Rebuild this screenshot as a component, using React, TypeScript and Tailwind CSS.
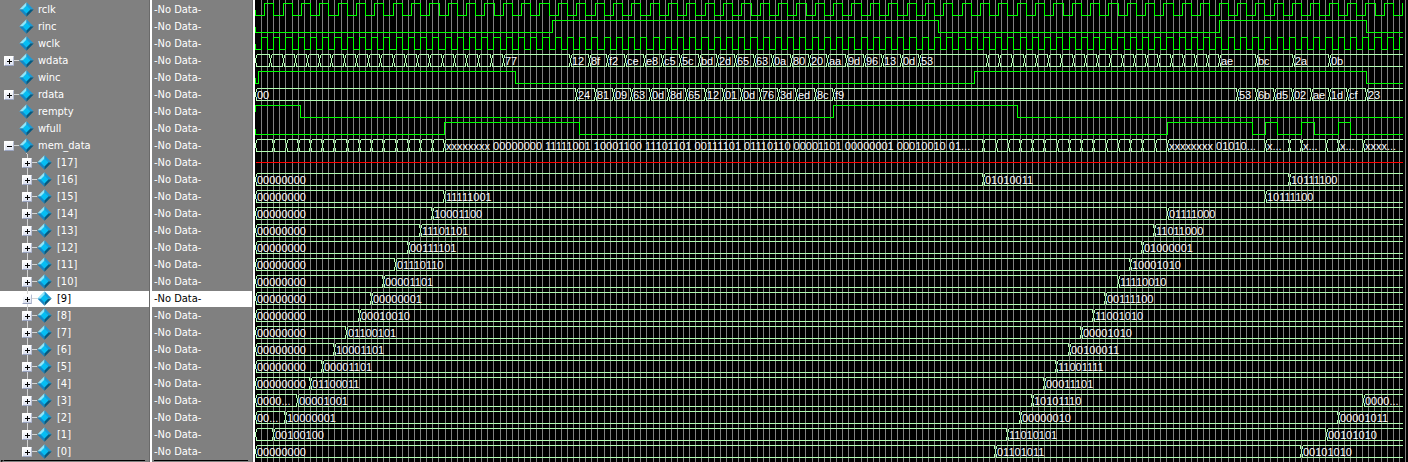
import React from "react";

type Segment = [start: number, text: string];
type Signal = {
  name: string;
  depth: 0 | 1;
  toggle?: "+" | "-";
  selected?: boolean;
  level?: { initial: 0 | 1; edges: number[] };
  bus?: Segment[];
  unknown?: boolean;
};

const ROW = 17;
const LEFT = 255;
const RIGHT = 1403;
const STEP = 6.1176;
const READ = 18.353;
const WRITE = 12.2352;

const GRID = Array.from({ length: 188 }, (_, k) => Math.round(261 + k * STEP));

function clock(first: number, half: number): number[] {
  const edges: number[] = [];
  for (let k = 0; first + k * half < RIGHT; k++) edges.push(first + k * half);
  return edges;
}

function run(first: number, period: number, values: string[]): Segment[] {
  return values.map((text, k) => [first + k * period, text]);
}

function blanks(first: number, count: number): Segment[] {
  return run(first, WRITE, Array<string>(count).fill(""));
}

const ZERO: Segment = [LEFT, "00000000"];

const SIGNALS: Signal[] = [
  { name: "rclk", depth: 0, level: { initial: 0, edges: clock(264.2, READ / 2) } },
  { name: "rinc", depth: 0, level: { initial: 0, edges: [552, 938, 1219, 1366] } },
  { name: "wclk", depth: 0, level: { initial: 0, edges: clock(261, STEP) } },
  {
    name: "wdata", depth: 0, toggle: "+",
    bus: [
      [LEFT, ""],
      ...blanks(270.3, 19),
      [503, "77"],
      ...run(570.3, READ, "12 8f f2 ce e8 c5 5c bd 2d 65 63 0a 80 20 aa 9d 96 13 0d 53".split(" ")),
      ...blanks(987.2, 19),
      [1219, "ae"], [1256, "bc"], [1293, "2a"], [1329, "0b"],
    ],
  },
  { name: "winc", depth: 0, level: { initial: 0, edges: [258, 515, 974, 1366] } },
  {
    name: "rdata", depth: 0, toggle: "+",
    bus: [
      [LEFT, "00"],
      ...run(576.2, READ, "24 81 09 63 0d 8d 65 12 01 0d 76 3d ed 8c f9".split(" ")),
      ...run(1237.2, READ, "53 6b d5 02 ae 1d cf 23".split(" ")),
    ],
  },
  { name: "rempty", depth: 0, level: { initial: 1, edges: [300, 833, 1017] } },
  { name: "wfull", depth: 0, level: { initial: 0, edges: [444, 579, 1167, 1252, 1265, 1277, 1301, 1314, 1338, 1350] } },
  {
    name: "mem_data", depth: 0, toggle: "-",
    bus: [
      [LEFT, ""],
      ...blanks(273.3, 14),
      [444, "xxxxxxxx 00000000 11111001 10001100 11101101 00111101 01110110 00001101 00000001 00010010 01..."],
      ...blanks(983.3, 15),
      [1167, "xxxxxxxx 01010..."], [1265, "x..."], [1289, ""], [1301, "x..."],
      [1326, ""], [1338, "x..."], [1363, "xxxx..."],
    ],
  },
  { name: "[17]", depth: 1, toggle: "+", unknown: true },
  { name: "[16]", depth: 1, toggle: "+", bus: [ZERO, [983, "01010011"], [1289, "10111100"]] },
  { name: "[15]", depth: 1, toggle: "+", bus: [ZERO, [444, "11111001"], [1265, "10111100"]] },
  { name: "[14]", depth: 1, toggle: "+", bus: [ZERO, [432, "10001100"], [1167, "01111000"]] },
  { name: "[13]", depth: 1, toggle: "+", bus: [ZERO, [420, "11101101"], [1154, "11011000"]] },
  { name: "[12]", depth: 1, toggle: "+", bus: [ZERO, [408, "00111101"], [1142, "01000001"]] },
  { name: "[11]", depth: 1, toggle: "+", bus: [ZERO, [395, "01110110"], [1130, "10001010"]] },
  { name: "[10]", depth: 1, toggle: "+", bus: [ZERO, [383, "00001101"], [1118, "11110010"]] },
  { name: "[9]", depth: 1, toggle: "+", selected: true, bus: [ZERO, [371, "00000001"], [1105, "00111100"]] },
  { name: "[8]", depth: 1, toggle: "+", bus: [ZERO, [359, "00010010"], [1093, "11001010"]] },
  { name: "[7]", depth: 1, toggle: "+", bus: [ZERO, [346, "01100101"], [1081, "00001010"]] },
  { name: "[6]", depth: 1, toggle: "+", bus: [ZERO, [334, "10001101"], [1069, "00100011"]] },
  { name: "[5]", depth: 1, toggle: "+", bus: [ZERO, [322, "00001101"], [1056, "11001111"]] },
  { name: "[4]", depth: 1, toggle: "+", bus: [ZERO, [310, "01100011"], [1044, "00011101"]] },
  { name: "[3]", depth: 1, toggle: "+", bus: [[LEFT, "0000..."], [297, "00001001"], [1032, "10101110"], [1363, "0000..."]] },
  { name: "[2]", depth: 1, toggle: "+", bus: [[LEFT, "00..."], [285, "10000001"], [1020, "00000010"], [1338, "00001011"]] },
  { name: "[1]", depth: 1, toggle: "+", bus: [[LEFT, ""], [273, "00100100"], [1007, "11010101"], [1326, "00101010"]] },
  { name: "[0]", depth: 1, toggle: "+", bus: [ZERO, [995, "01101011"], [1301, "00101010"]] },
];

function Diamond() {
  return (
    <svg width="15" height="15" viewBox="0 0 15 15" className="shrink-0" aria-hidden="true">
      <path d="M7.5 0.3 L7.5 7.5 L0.3 7.5Z" fill="#8fe6fb" />
      <path d="M7.5 0.3 L14.7 7.5 L7.5 7.5Z" fill="#1b9ad6" />
      <path d="M0.3 7.5 L7.5 7.5 L7.5 14.7Z" fill="#1686c4" />
      <path d="M14.7 7.5 L7.5 14.7 L7.5 7.5Z" fill="#055a80" />
      <path d="M7.5 3.6 L11.4 7.5 L7.5 11.4 L3.6 7.5Z" fill="#06bdf2" />
    </svg>
  );
}

function Toggle({ sign, name }: { sign: "+" | "-"; name: string }) {
  return (
    <button
      type="button"
      aria-label={(sign === "+" ? "Expand " : "Collapse ") + name}
      className="h-[10px] w-[10px] shrink-0 rounded-[1px] border border-white border-r-[#b4bcd2] border-b-[#9aa4c0] bg-linear-to-b from-white to-[#dde2f0]"
    >
      <svg width="8" height="8" viewBox="0 0 8 8" className="block" shapeRendering="crispEdges" stroke="#000" aria-hidden="true">
        <path d={sign === "+" ? "M2 4.5H7 M4.5 2V7" : "M2 4.5H7"} />
      </svg>
    </button>
  );
}

function NameRow({ signal, last }: { signal: Signal; last: boolean }) {
  const nested = signal.depth === 1;
  return (
    <li className={"flex h-[17px] pt-px bg-clip-content " + (signal.selected ? "bg-white text-black" : "text-white")}>
      <div className={"-mt-px flex h-[17px] " + (nested ? "pl-[22px]" : "pl-1")}>
        <div className="flex w-[10px] flex-col items-center">
          <span className={"h-1 w-px " + (nested ? "bg-[#d4d4d4]" : "")} />
          {signal.toggle && <Toggle sign={signal.toggle} name={signal.name} />}
          <span className={"w-px flex-1 " + (nested && !last ? "bg-[#d4d4d4]" : "")} />
        </div>
        <span className={"mt-2 h-px w-[5px] " + (signal.toggle ? "bg-[#d4d4d4]" : "")} />
        <div className="flex flex-col items-center pt-px">
          <Diamond />
          {signal.toggle === "-" && <span className="h-px w-px bg-[#d4d4d4]" />}
        </div>
        <span className={"leading-[17px] " + (nested ? "pl-[5px]" : "pl-1")}>{signal.name}</span>
      </div>
    </li>
  );
}

function levelPath(initial: 0 | 1, edges: number[], top: number): string {
  const hi = top + 3.5;
  const lo = top + 15.5;
  let high = initial === 1;
  let d = `M${LEFT + 0.5} ${top + 10} V${high ? hi : lo}`;
  for (const edge of edges) {
    high = !high;
    d += ` H${Math.round(edge) + 0.5} V${high ? hi : lo}`;
  }
  return d + ` H${RIGHT}`;
}

function busPath(segments: Segment[], top: number): string {
  const hi = top + 3.5;
  const lo = top + 15.5;
  return segments
    .map(([start], k) => {
      const a = Math.round(start) + 0.5;
      const lead = `M${a + 1} ${hi} V${hi + 3} L${a} ${hi + 4} V${lo - 4} L${a + 1} ${lo - 3} V${lo}`;
      if (k === segments.length - 1) return `${lead} H${RIGHT} M${a + 1} ${hi} H${RIGHT}`;
      const b = Math.round(segments[k + 1][0]) + 0.5;
      return `${lead} H${b - 1} V${lo - 3} L${b} ${lo - 4} V${hi + 4} L${b - 1} ${hi + 3} V${hi} H${a + 1}`;
    })
    .join(" ");
}

function Wave({ signal, top }: { signal: Signal; top: number }) {
  if (signal.unknown) return <path d={`M${LEFT + 1} ${top + 9.5} H${RIGHT}`} stroke="#ff0000" />;
  if (signal.level) return <path d={levelPath(signal.level.initial, signal.level.edges, top)} stroke="#00ff00" />;
  const bus = signal.bus ?? [];
  return (
    <g>
      <path d={busPath(bus, top)} stroke="#b4ffb4" />
      {bus.map(([start, text], k) =>
        text ? (
          <text key={k} x={Math.round(start) + 2} y={top + 14} fill="#fff" stroke="none">
            {text}
          </text>
        ) : null,
      )}
    </g>
  );
}

export default function App() {
  return (
    <main className="flex min-h-screen overflow-hidden bg-[#808080] font-['DejaVu_Sans_Condensed','Noto_Sans',sans-serif] text-[11px]">
      <section aria-label="Signals" className="w-[150px] shrink-0 border-r border-[#6a6a6a] pt-px">
        <ul>
          {SIGNALS.map((s, i) => (
            <NameRow key={s.name} signal={s} last={i === SIGNALS.length - 1} />
          ))}
        </ul>
        <div className="flex items-start">
          <svg width="4" height="2" viewBox="0 0 4 2" aria-hidden="true">
            <path d="M1 0 L4 0.5 L1 2Z" fill="#000" />
          </svg>
          <div className="mr-1 h-px flex-1 bg-black" />
        </div>
      </section>
      <section aria-label="Values" className="w-[103px] shrink-0 border-l-2 border-r border-l-white border-r-[#6a6a6a] pt-px">
        <ul>
          {SIGNALS.map((s) => (
            <li
              key={s.name}
              className={"h-[17px] pt-px bg-clip-content " + (s.selected ? "bg-white text-black" : "text-white")}
            >
              <span className="-mt-px block pl-0.5 leading-[17px]">-No Data-</span>
            </li>
          ))}
        </ul>
        <div className="ml-0.5 mr-1 h-px bg-black" />
      </section>
      <section aria-label="Waveforms" className="min-w-0 flex-1 overflow-hidden border-l-2 border-white bg-black">
        <svg
          width="1153"
          height="462"
          viewBox="255 0 1153 462"
          fill="none"
          shapeRendering="crispEdges"
          className="block max-w-none font-['Liberation_Sans',sans-serif] text-[11px]"
        >
          <path d={GRID.map((x) => `M${x + 0.5} 0 V462`).join(" ")} stroke="#808080" />
          {SIGNALS.map((s, i) => (
            <Wave key={s.name} signal={s} top={i * ROW} />
          ))}
        </svg>
      </section>
    </main>
  );
}
